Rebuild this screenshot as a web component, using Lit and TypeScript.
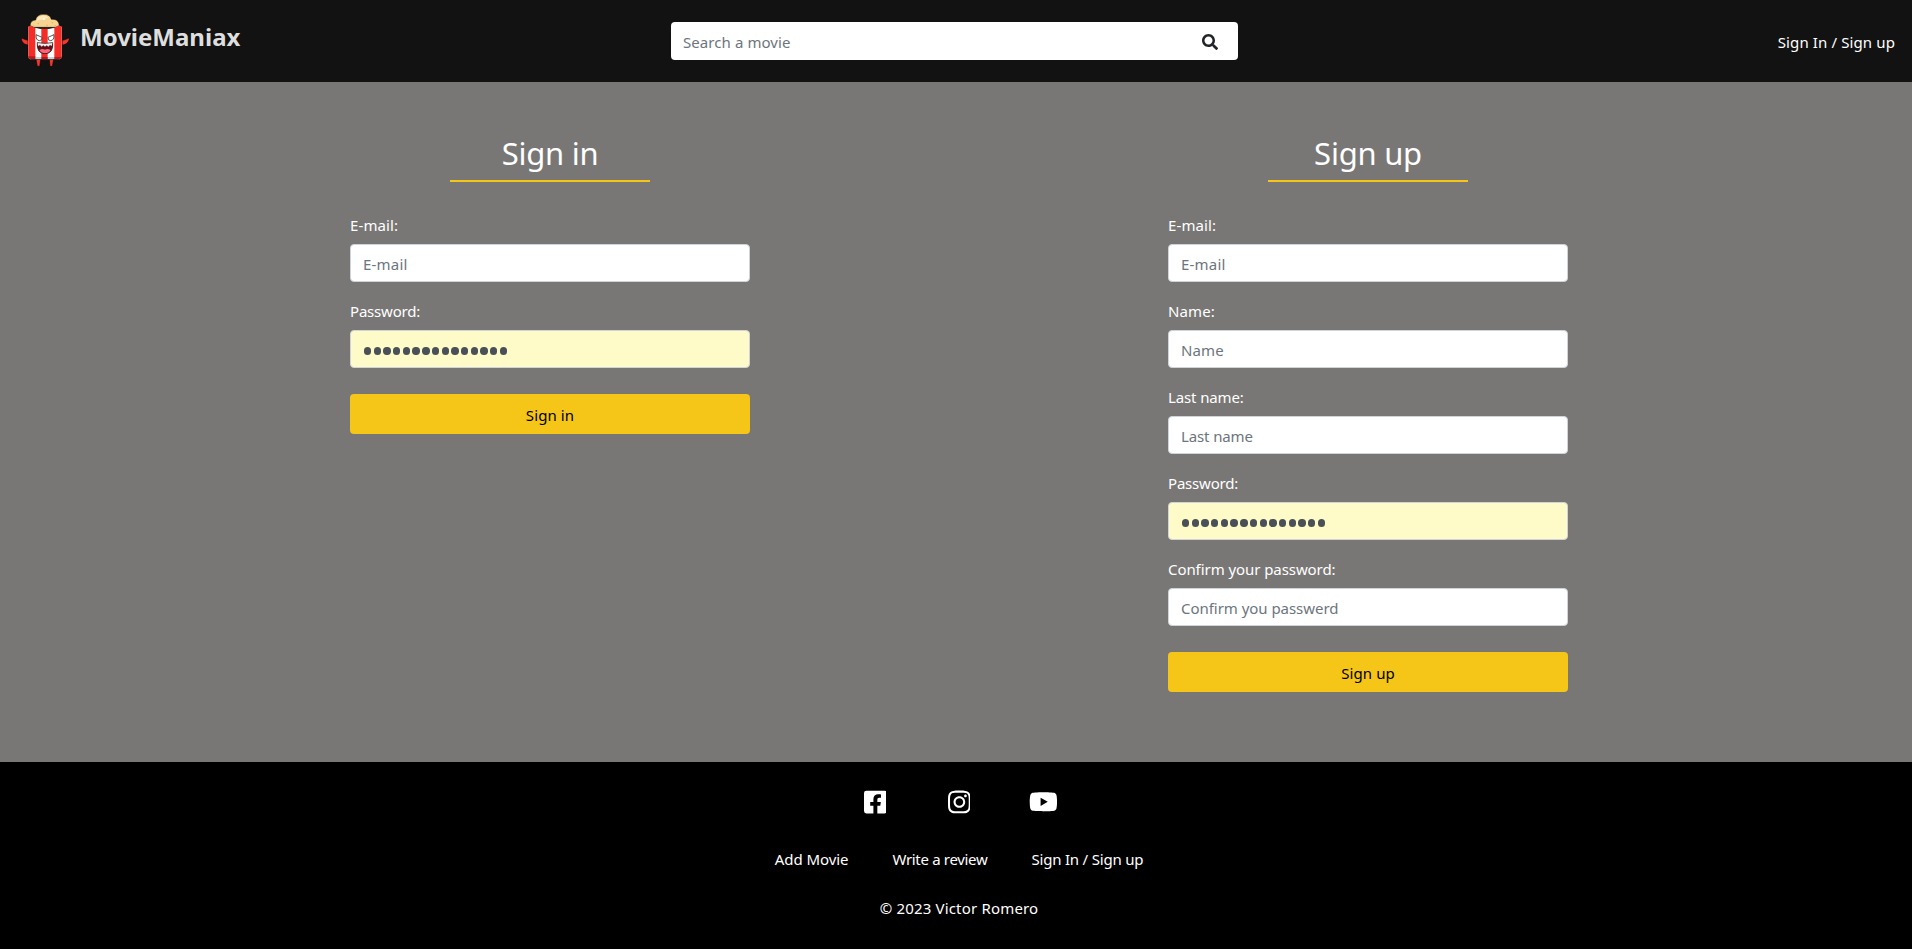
import { LitElement, html, css, svg } from "lit";
import { customElement, property } from "lit/decorators.js";

interface Field {
  label: string;
  placeholder: string;
  ls: number;
  phLs: number;
  filled?: boolean;
}

const FONT = css`"Noto Sans", "Open Sans", sans-serif`;

@customElement("mm-logo")
class MmLogo extends LitElement {
  static styles = css`
    :host { display: block; width: 50px; height: 55px; }
    svg { display: block; }
  `;
  render() {
    return html`<svg width="50" height="55" viewBox="60 36 150 165">
      <g stroke="#050505" stroke-width="1.500" stroke-linejoin="round">
        <path fill="#f2382c" d="M85 121c-8 0-11-4-21-6 1 12 9 19 21 20zM186 121c9 0 12-4 22-7-1 12-9 20-22 21z"/>
        <path fill="#f2382c" d="M108 177h14l-3 22h-7zM148 177h13l-4 22h-7z"/>
        <path fill="#f7d591" d="M92 82c-4-12 3-22 15-22 2-11 11-17 25-17 12 0 20 6 22 15 16-2 26 8 23 24z"/>
        <path fill="#fdfdfb" d="M84 80q7-5 12-1 6 6 12 4 26 8 52 0 6 2 12-4 6-4 14 1v87q0 11-11 11h-80q-11 0-11-11z"/>
      </g>
      <path fill="#ffe9bb" d="M109 64c2-12 10-17 22-17 8 0 14 4 14 8-8-3-13 1-14 6-9-3-15-1-22 3z"/>
      <circle cx="133" cy="57" r="3" fill="#fffbe9"/>
      <path fill="#e2aa62" d="M98 76l3-2 2 3zM113 70h4v3h-4zM139 74h4v3h-4zM155 67h4v3h-4zM164 76h4v3h-4z"/>
      <path fill="#f42d26" d="M85 80q6-5 11-1 5 5 10 5v93H95q-10 0-10-10zM124 86h19v91h-19zM163 83q4 0 9-4 6-4 13 1v87q0 10-10 10h-12z"/>
      <path fill="#b9d9df" d="M106 171h18v6h-18zM143 171h20v6h-20z"/>
      <path fill="#bd171c" d="M85 169h21v8H95q-9 0-10-8zM124 171h19v6h-19zM163 171h22q-2 6-10 6h-12z"/>
      <g fill="#fff" stroke="#333" stroke-width="2.5">
        <path d="M108 104l18 8q1 10-8 10-11-1-10-18zM162 104l-18 8q-1 10 8 10 11-1 10-18z"/>
      </g>
      <path fill="#651018" stroke="#25151b" stroke-width="2.5" d="M112 128q23 5 46 0 3 32-23 33-26-1-23-33z"/>
      <path fill="#e7eef0" d="M113 129q22 4 44 0l-2 9-5-3-5 5-5-4-5 4-5-4-5 4-5-5-6 3z"/>
      <path fill="#fa6678" d="M118 151q8-7 17-2 9-5 17 2-6 9-17 9t-17-9z"/>
    </svg>`;
  }
}

@customElement("mm-header")
class MmHeader extends LitElement {
  static styles = css`
    :host { display: block; background: #121212; font-family: ${FONT}; }
    .bar { display: grid; grid-template-columns: 671px 567px 1fr; height: 82px; box-sizing: border-box; padding-top: 12px; align-items: start; }
    .brand { display: flex; gap: 10px; padding-left: 20px; }
    .name { font-size: 24px; font-weight: 700; line-height: 36px; padding-top: 7px; color: #dedede; }
    .search { display: flex; align-items: center; height: 38px; margin-top: 10px; box-sizing: border-box; background: #fff; border-radius: 4px; padding: 0 20px 0 12px; }
    .search input { flex: 1; height: 38px; box-sizing: border-box; border: 0; outline: 0; background: none; padding: 2px 0 0; font: 15px ${FONT}; letter-spacing: 0.08px; }
    .search input::placeholder { color: #6c757d; opacity: 1; }
    .search svg { display: block; margin-top: 1px; }
    .sign { justify-self: end; padding: 18px 17px 0 0; font-size: 15px; line-height: 24px; letter-spacing: 0.12px; color: #fff; }
  `;
  render() {
    return html`<div class="bar">
      <div class="brand"><mm-logo></mm-logo><span class="name">MovieManiax</span></div>
      <div class="search">
        <input placeholder="Search a movie" />
        <svg width="16" height="16" viewBox="0 0 512 512" fill="#212529"><path d="M505 442.7L405.3 343c-4.500-4.500-10.600-7-17-7H372c27.600-35.300 44-79.700 44-128C416 93.100 322.900 0 208 0S0 93.100 0 208s93.100 208 208 208c48.300 0 92.700-16.400 128-44v16.300c0 6.400 2.500 12.500 7 17l99.700 99.700c9.400 9.400 24.600 9.400 33.900 0l28.300-28.300c9.400-9.400 9.400-24.600.1-34zM208 336c-70.700 0-128-57.200-128-128 0-70.700 57.200-128 128-128 70.700 0 128 57.200 128 128 0 70.700-57.200 128-128 128z"/></svg>
      </div>
      <span class="sign">Sign In / Sign up</span>
    </div>`;
  }
}

@customElement("mm-form")
class MmForm extends LitElement {
  static styles = css`
    :host { display: block; width: 400px; font-family: ${FONT}; color: #fff; }
    h2 { width: 200px; margin: 0 auto 30px; box-sizing: border-box; height: 50px; border-bottom: 2px solid #f5c518; font-size: 31px; font-weight: 400; line-height: 42px; text-align: center; letter-spacing: -0.25px; }
    .field { margin-bottom: 16px; }
    label { display: block; font-size: 15px; line-height: 26px; margin-bottom: 6px; }
    .box { display: flex; align-items: center; width: 400px; height: 38px; box-sizing: border-box; border: 1px solid #ced4da; border-radius: 4px; background: #fff; padding: 2px 12px 0; font: 15px ${FONT}; outline: 0; }
    .box::placeholder { color: #6c757d; opacity: 1; }
    .filled { background: #fffbc8; gap: 2.3px; padding-left: 13px; padding-top: 4px; }
    .dot { width: 7.4px; height: 7.4px; border-radius: 50%; background: #495057; }
    button { display: block; width: 400px; height: 40px; margin-top: 26px; padding: 2px 0 0; border: 0; border-radius: 4px; background: #f5c518; color: #000; font: 15px ${FONT}; letter-spacing: 0.1px; }
  `;
  @property() heading = "";
  @property({ attribute: false }) fields: Field[] = [];
  render() {
    return html`<h2>${this.heading}</h2>
      ${this.fields.map((f) => html`<div class="field">
        <label style="letter-spacing:${f.ls}px">${f.label}</label>
        ${f.filled
          ? html`<div class="box filled">${Array.from({ length: 15 }, () => html`<span class="dot"></span>`)}</div>`
          : html`<input class="box" style="letter-spacing:${f.phLs}px" placeholder=${f.placeholder} />`}
      </div>`)}
      <button>${this.heading}</button>`;
  }
}

@customElement("mm-footer")
class MmFooter extends LitElement {
  static styles = css`
    :host { display: block; height: 187px; box-sizing: border-box; background: #000; color: #fff; font-family: ${FONT}; font-size: 15px; line-height: 26px; padding: 27px 0 0 6px; }
    .icons { display: grid; grid-template-columns: repeat(3, 84px); justify-content: center; justify-items: center; align-items: center; height: 26px; }
    svg { display: block; fill: #fff; }
    .links { display: flex; justify-content: center; gap: 44px; padding-top: 31px; }
    .add { letter-spacing: -0.06px; }
    .write { letter-spacing: -0.32px; }
    .sign { letter-spacing: -0.2px; }
    .copy { text-align: center; padding-top: 23px; letter-spacing: 0.18px; }
  `;
  render() {
    const icon = (w: number, size: number, d: string) => html`<svg width=${(w / 512) * size} height=${size} viewBox="0 0 ${w} 512">${svg`<path d=${d}/>`}</svg>`;
    return html`
      <div class="icons">
        ${icon(448, 26, "M400 32H48A48 48 0 0 0 0 80v352a48 48 0 0 0 48 48h137.250V327.690h-63V256h63v-54.640c0-62.150 37-96.480 93.670-96.480 27.140 0 55.520 4.840 55.520 4.840v61h-31.270c-30.810 0-40.420 19.120-40.420 38.730V256h68.780l-11 71.690h-57.780V480H400a48 48 0 0 0 48-48V80a48 48 0 0 0-48-48z")}
        ${icon(448, 26, "M224.1 141c-63.600 0-114.900 51.300-114.900 114.900s51.300 114.900 114.900 114.900S339 319.500 339 255.900 287.700 141 224.100 141zm0 189.600c-41.100 0-74.700-33.500-74.700-74.700s33.500-74.700 74.700-74.700 74.700 33.500 74.700 74.700-33.600 74.700-74.700 74.700zm146.400-194.300c0 14.900-12 26.800-26.800 26.800-14.900 0-26.800-12-26.800-26.800s12-26.800 26.800-26.800 26.800 12 26.800 26.800zm76.100 27.200c-1.700-35.900-9.900-67.700-36.200-93.900-26.200-26.200-58-34.400-93.900-36.200-37-2.100-147.900-2.100-184.900 0-35.800 1.700-67.600 9.900-93.900 36.100s-34.400 58-36.200 93.900c-2.100 37-2.100 147.900 0 184.900 1.700 35.900 9.900 67.700 36.200 93.900s58 34.400 93.900 36.200c37 2.100 147.900 2.100 184.900 0 35.900-1.700 67.700-9.900 93.900-36.200 26.200-26.200 34.400-58 36.200-93.900 2.100-37 2.100-147.800 0-184.800zM398.800 388c-7.800 19.600-22.900 34.700-42.600 42.600-29.500 11.700-99.500 9-132.100 9s-102.700 2.600-132.100-9c-19.600-7.800-34.700-22.900-42.600-42.600-11.700-29.500-9-99.500-9-132.100s-2.600-102.700 9-132.100c7.800-19.600 22.900-34.700 42.600-42.600 29.500-11.700 99.500-9 132.100-9s102.700-2.600 132.100 9c19.600 7.800 34.700 22.900 42.600 42.600 11.700 29.500 9 99.500 9 132.100s2.700 102.700-9 132.100z")}
        ${icon(576, 25.6, "M549.655 124.083c-6.281-23.650-24.787-42.276-48.284-48.597C458.781 64 288 64 288 64S117.220 64 74.629 75.486c-23.497 6.322-42.003 24.947-48.284 48.597-11.412 42.867-11.412 132.305-11.412 132.305s0 89.438 11.412 132.305c6.281 23.650 24.787 41.500 48.284 47.821C117.220 448 288 448 288 448s170.780 0 213.371-11.486c23.497-6.321 42.003-24.171 48.284-47.821 11.412-42.867 11.412-132.305 11.412-132.305s0-89.438-11.412-132.305zm-317.510 213.508V175.185l142.739 81.205-142.739 81.201z")}
      </div>
      <div class="links"><span class="add">Add Movie</span><span class="write">Write a review</span><span class="sign">Sign In / Sign up</span></div>
      <div class="copy">© 2023 Victor Romero</div>`;
  }
}

@customElement("app-root")
class AppRoot extends LitElement {
  static styles = css`
    :host { display: block; background: #797775; }
    main { display: grid; grid-template-columns: 400px 400px; column-gap: 418px; height: 680px; box-sizing: border-box; padding: 50px 0 0 350px; align-items: start; background: #797775; }
  `;
  private signIn: Field[] = [
    { label: "E-mail:", placeholder: "E-mail", ls: 0.12, phLs: 0.2 },
    { label: "Password:", placeholder: "", ls: -0.2, phLs: 0, filled: true },
  ];
  private signUp: Field[] = [
    { label: "E-mail:", placeholder: "E-mail", ls: 0.12, phLs: 0.2 },
    { label: "Name:", placeholder: "Name", ls: 0.1, phLs: 0.1 },
    { label: "Last name:", placeholder: "Last name", ls: -0.12, phLs: -0.12 },
    { label: "Password:", placeholder: "", ls: -0.2, phLs: 0, filled: true },
    { label: "Confirm your password:", placeholder: "Confirm you passwerd", ls: -0.07, phLs: -0.04 },
  ];
  render() {
    return html`<mm-header></mm-header>
      <main>
        <mm-form heading="Sign in" .fields=${this.signIn}></mm-form>
        <mm-form heading="Sign up" .fields=${this.signUp}></mm-form>
      </main>
      <mm-footer></mm-footer>`;
  }
}
